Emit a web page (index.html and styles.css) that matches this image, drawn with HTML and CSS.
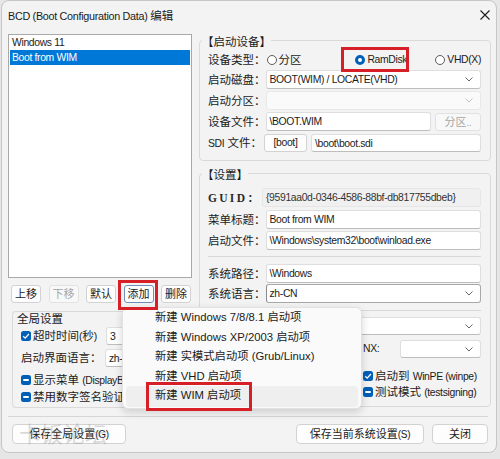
FILE: index.html
```html
<!DOCTYPE html>
<html lang="zh-CN">
<head>
<meta charset="utf-8">
<title>BCD 编辑</title>
<link rel="stylesheet" href="styles.css">
</head>
<body>
<div class="win">
  <div class="titlebar">
    <span class="title"><span class="en tt">BCD (Boot Configuration Data) </span>编辑</span>
    <svg class="close" viewBox="0 0 10 10"><path d="M0.5 0.5 L9.5 9.5 M9.5 0.5 L0.5 9.5" stroke="#1b1b1b" stroke-width="1.1" fill="none"/></svg>
  </div>
  <div class="main">
    <div class="left">
      <div class="listbox">
        <div class="item">Windows 11</div>
        <div class="item sel">Boot from WIM</div>
      </div>
      <div class="btnrow">
        <button class="btn sm">上移</button>
        <button class="btn sm" disabled>下移</button>
        <button class="btn sm">默认</button>
        <button class="btn sm focus">添加</button>
        <button class="btn sm">删除</button>
      </div>
      <div class="group global">
        <div class="gtitle plain">全局设置</div>
        <div class="grow r1">
          <span class="chk on"><svg viewBox="0 0 10 10"><path d="M2.2 5.2 L4.2 7.1 L7.9 3" fill="none" stroke="#fff" stroke-width="1.3"/></svg></span>
          <span class="ctext w-timeout">超时时间<span class="en">(</span>秒<span class="en">)</span></span>
          <span class="tb short">3</span>
        </div>
        <div class="grow r2">
          <span class="glbl">启动界面语言：</span>
          <span class="tb combo short">zh-CN<svg class="chev" viewBox="0 0 8 5"><path d="M0.5 0.5 L4 4 L7.5 0.5" fill="none" stroke="#666" stroke-width="1"/></svg></span>
        </div>
        <div class="grow r3">
          <span class="chk mixed"><i></i></span>
          <span class="ctext">显示菜单 <span class="en">(DisplayBootMenu)</span></span>
        </div>
        <div class="grow r4">
          <span class="chk mixed"><i></i></span>
          <span class="ctext">禁用数字签名验证</span>
        </div>
      </div>
    </div>
    <div class="right">
      <div class="group g1">
        <div class="gtitle">【启动设备】</div>
        <div class="row radios">
          <span class="lbl">设备类型：</span>
          <span class="opt o1"><span class="radio"></span>分区</span>
          <span class="opt o2"><span class="radio on"></span><span class="en">RamDisk</span></span>
          <span class="opt o3"><span class="radio"></span><span class="en">VHD(X)</span></span>
        </div>
        <div class="row m1">
          <span class="lbl">启动磁盘：</span>
          <span class="tb combo">BOOT(WIM) / LOCATE(VHD)<svg class="chev" viewBox="0 0 8 5"><path d="M0.5 0.5 L4 4 L7.5 0.5" fill="none" stroke="#666" stroke-width="1"/></svg></span>
        </div>
        <div class="row m2">
          <span class="lbl">启动分区：</span>
          <span class="tb combo dis"><svg class="chev" viewBox="0 0 8 5"><path d="M0.5 0.5 L4 4 L7.5 0.5" fill="none" stroke="#c4c4c4" stroke-width="1"/></svg></span>
        </div>
        <div class="row m2">
          <span class="lbl">设备文件：</span>
          <span class="tb">\BOOT.WIM</span>
          <button class="btn part" disabled>分区<span class="en">..</span></button>
        </div>
        <div class="row m3">
          <span class="lbl"><span class="en">SDI</span> 文件：</span>
          <button class="btn boot en">[boot]</button>
          <span class="tb">\boot\boot.sdi</span>
        </div>
      </div>
      <div class="group g2">
        <div class="gtitle">【设置】</div>
        <div class="row guidrow">
          <span class="lbl guid">GUID：</span>
          <span class="tb ro">{9591aa0d-0346-4586-88bf-db817755dbeb}</span>
        </div>
        <div class="row m4">
          <span class="lbl">菜单标题：</span>
          <span class="tb">Boot from WIM</span>
        </div>
        <div class="row m2">
          <span class="lbl">启动文件：</span>
          <span class="tb">\Windows\system32\boot\winload.exe</span>
        </div>
        <div class="hsep s1"></div>
        <div class="row m5">
          <span class="lbl">系统路径：</span>
          <span class="tb">\Windows</span>
        </div>
        <div class="row m1">
          <span class="lbl">系统语言：</span>
          <span class="tb combo dark">zh-CN<svg class="chev" viewBox="0 0 8 5"><path d="M0.5 0.5 L4 4 L7.5 0.5" fill="none" stroke="#666" stroke-width="1"/></svg></span>
        </div>
        <div class="hsep s2"></div>
        <div class="row short18 m6">
          <span class="lbl"></span>
          <span class="tb combo"><svg class="chev" viewBox="0 0 8 5"><path d="M0.5 0.5 L4 4 L7.5 0.5" fill="none" stroke="#666" stroke-width="1"/></svg></span>
        </div>
        <div class="row short18 m7">
          <span class="spacer"></span>
          <span class="nxl en">NX:</span>
          <span class="tb combo"><svg class="chev" viewBox="0 0 8 5"><path d="M0.5 0.5 L4 4 L7.5 0.5" fill="none" stroke="#666" stroke-width="1"/></svg></span>
        </div>
        <div class="row crow m8">
          <span class="spacer"></span>
          <span class="chk on"><svg viewBox="0 0 10 10"><path d="M2.2 5.2 L4.2 7.1 L7.9 3" fill="none" stroke="#fff" stroke-width="1.3"/></svg></span>
          <span class="ctext">启动到 <span class="en">WinPE (winpe)</span></span>
        </div>
        <div class="row crow">
          <span class="spacer"></span>
          <span class="chk mixed"><i></i></span>
          <span class="ctext">测试模式 <span class="en">(testsigning)</span></span>
        </div>
      </div>
    </div>
  </div>
  <div class="bsep"></div>
  <div class="footer">
    <button class="btn fb b1">保存全局设置<span class="en">(G)</span></button>
    <button class="btn fb b2">保存当前系统设置<span class="en">(S)</span></button>
    <button class="btn fb b3">关闭</button>
  </div>

  <div class="menu">
    <div class="mi">新建 Windows 7/8/8.1 启动项</div>
    <div class="mi">新建 Windows XP/2003 启动项</div>
    <div class="mi">新建 实模式启动项 (Grub/Linux)</div>
    <div class="mi">新建 VHD 启动项</div>
    <div class="mi hover">新建 WIM 启动项</div>
  </div>

  <div class="redbox rb-add"></div>
  <div class="redbox rb-ram"></div>
  <div class="redbox rb-wim"></div>
  <div class="watermark">卡饭论坛</div>
</div>
</body>
</html>
```
FILE: styles.css
```css
* { box-sizing: border-box; }
html, body { margin: 0; padding: 0; }
body {
  background: #e6e6e6;
  width: 500px;
  height: 459px;
  overflow: hidden;
  font-family: "Liberation Sans", "Noto Sans CJK SC", sans-serif;
  font-size: 11.5px;
  line-height: 14px;
  color: #1b1b1b;
}
.en { font-size: 10.4px; letter-spacing: -0.35px; }
.en.tt { font-size: 10.8px; letter-spacing: -0.3px; }
.win {
  position: relative;
  margin-left: 1px;
  width: 496px;
  height: 453px;
  background: #f3f3f3;
  border: 1px solid #c6c6c6;
  border-radius: 8px;
}
.titlebar {
  height: 29px;
  display: flex;
  align-items: center;
  justify-content: space-between;
  padding: 0 6px;
}
.close { width: 10px; height: 10px; margin-top: -2px; }

.main { display: flex; padding-left: 6px; }
.left { width: 185px; display: flex; flex-direction: column; }
.listbox {
  margin-top: 4px;
  height: 244px;
  width: 184px;
  background: #fff;
  border: 1px solid #a9a9a9;
}
.item { height: 15px; line-height: 15px; padding-left: 3px; white-space: nowrap; font-size: 10.4px; letter-spacing: -0.35px; }
.item.sel { background: #0078d7; color: #fff; margin: 0 1px; padding-left: 2px; }

.btn {
  font: inherit;
  font-size: 11px;
  color: #1b1b1b;
  background: #fdfdfd;
  border: 1px solid #d2d2d2;
  border-radius: 3px;
  padding: 0;
  line-height: 16px;
  white-space: nowrap;
}
.btn .en { font-size: 10px; }
.btn.en { font-size: 10.4px; }
.btn:disabled { color: #a6a6a6; background: #f8f8f8; border-color: #e2e2e2; }
.btnrow { display: flex; gap: 7.5px; margin-top: 7px; padding-left: 3px; height: 18px; }
.btn.sm { width: 30px; height: 18px; }
.btn.focus { border-color: #6f8fb8; }

.group { border: 1px solid #dadada; border-radius: 4px; display: flex; flex-direction: column; }
.gtitle {
  align-self: flex-start;
  height: 12px;
  line-height: 12px;
  background: #f3f3f3;
  margin-top: -5px;
  margin-left: -6px;
  white-space: nowrap;
}
.gtitle.plain { margin: 1px 0 0 0; background: transparent; }

.global {
  margin-top: 8px;
  margin-left: 4px;
  width: 181px;
  height: 97px;
  padding: 0 0 0 8px;
  overflow: hidden;
  border-right: none;
}
.global .gtitle.plain { margin-left: -4px; }
.grow { display: flex; align-items: center; white-space: nowrap; }
.grow.r1 { height: 18px; margin-top: 2px; }
.grow.r2 { height: 18px; margin-top: 4px; }
.grow.r3 { height: 18px; margin-top: 4px; }
.grow.r4 { height: 16px; }
.w-timeout { width: 73px; }
.glbl { width: 84px; }
.tb.short { flex: 0 0 86px; height: 18px; }

.chk {
  flex: 0 0 10px;
  width: 10px;
  height: 10px;
  border-radius: 2.5px;
  background: #005fb8;
  display: inline-flex;
  align-items: center;
  justify-content: center;
}
.chk svg { width: 10px; height: 10px; display: block; }
.chk.mixed i { display: block; width: 6px; height: 1.6px; background: #fff; border-radius: 1px; }
.ctext { margin-left: 2px; white-space: nowrap; }

.right { width: 292px; margin-left: 6px; display: flex; flex-direction: column; }
.g1 { margin-top: 10px; height: 121px; padding: 0 9px 0 8px; }
.g2 { margin-top: 12px; height: 234px; padding: 0 9px 0 8px; }

.row { display: flex; align-items: center; height: 19px; white-space: nowrap; }
.row.radios { margin-top: 3px; height: 18px; }
.row.m1 { margin-top: 1px; }
.row.m2 { margin-top: 2px; }
.row.m3 { margin-top: 3px; height: 18px; }
.row.m4 { margin-top: 3px; }
.row.m5 { margin-top: 7px; }
.row.m6 { margin-top: 6px; }
.row.m7 { margin-top: 5px; }
.row.m8 { margin-top: 10px; }
.row.short18 { height: 18px; }
.row.crow { height: 16px; }
.row.guidrow { margin-top: 7px; }
.lbl { flex: 0 0 54px; white-space: nowrap; }
.guid {
  font-family: "Liberation Serif", "Noto Serif CJK SC", "Noto Sans CJK SC", serif;
  font-weight: bold;
  letter-spacing: 2.3px;
  color: #2a2a2a;
}
.spacer { flex: 0 0 155px; }
.nxl { flex: 0 0 37px; }

.tb {
  position: relative;
  flex: 1;
  height: 100%;
  background: #fff;
  border: 1px solid #dedede;
  border-bottom-color: #bdbdbd;
  border-radius: 3px;
  padding-left: 3px;
  line-height: 17px;
  font-size: 10.4px;
  letter-spacing: -0.35px;
  white-space: nowrap;
  overflow: hidden;
}
.tb.ro { background: #f0f0f0; border-color: #e6e6e6; color: #333; }
.tb.dis { background: #fafafa; border-color: #e8e8e8; }
.tb.dark { border-color: #a8a8a8; border-left-color: #8c8c8c; }
.chev { position: absolute; right: 7px; top: 6px; width: 8px; height: 5px; }

.opt { display: flex; align-items: center; }
.o1 { margin-left: 1px; width: 89px; }
.o2 { width: 80px; }
.radio {
  width: 10px;
  height: 10px;
  border: 1px solid #5c5c5c;
  border-radius: 50%;
  background: #fff;
  margin-right: 2px;
  flex: 0 0 10px;
}
.radio.on { border: 3px solid #005fb8; }

.btn.part { flex: 0 0 46px; height: 18px; margin-left: 4px; }
.btn.boot { flex: 0 0 43px; height: 18px; margin: 0 4px 0 2px; }

.hsep { height: 1px; background: #d8d8d8; margin-right: 0; }
.hsep.s1 { margin-top: 6px; }
.hsep.s2 { margin-top: 7px; }

.bsep { height: 1px; background: #d6d6d6; margin: 8px 8px 0 6px; }
.footer { display: flex; margin-top: 7px; padding-left: 10px; height: 20px; }
.btn.fb { height: 20px; line-height: 18px; border-radius: 4px; }
.b1 { width: 114px; }
.b2 { width: 128px; margin-left: 170px; }
.b3 { width: 56px; margin-left: 8px; }

.menu {
  position: absolute;
  left: 120px;
  top: 306px;
  width: 240px;
  height: 102px;
  background: #fafafa;
  border: 1px solid #e2e2e2;
  border-radius: 6px;
  box-shadow: 0 3px 8px rgba(0,0,0,0.16);
  font-size: 11.3px;
}
.mi { height: 19.5px; line-height: 19.5px; padding-left: 29px; margin: 0 3px; border-radius: 4px; white-space: nowrap; color: #1a1a1a; }
.mi.hover { background: #efefef; height: 21px; }

.redbox { position: absolute; border: 3px solid #d61f27; }
.rb-add { left: 116px; top: 279px; width: 40px; height: 30px; }
.rb-ram { left: 339px; top: 46px; width: 68px; height: 25px; }
.rb-wim { left: 144px; top: 381px; width: 106px; height: 29px; }

.watermark {
  position: absolute;
  left: 17px;
  top: 421px;
  font-size: 22px;
  line-height: 26px;
  color: rgba(150,150,150,0.35);
  pointer-events: none;
}
```
